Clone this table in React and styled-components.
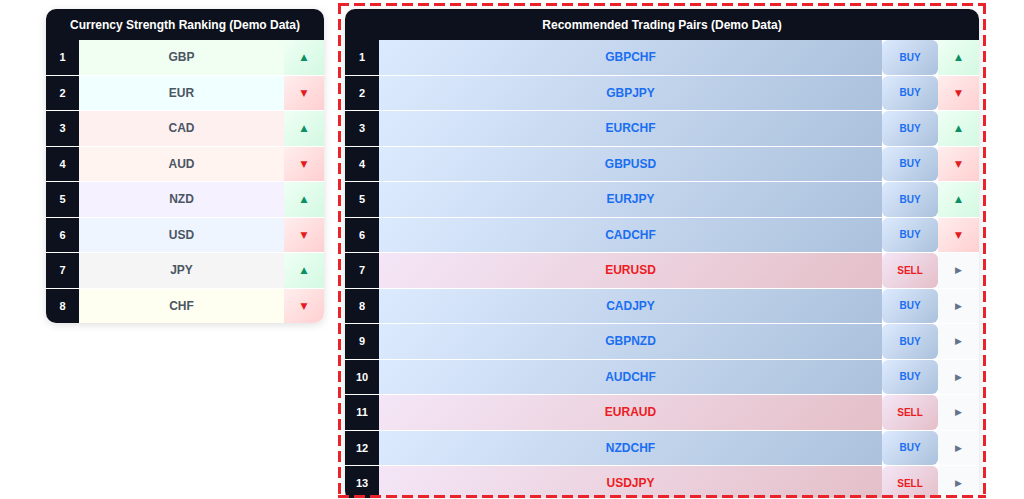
import React from "react";
import styled, { createGlobalStyle } from "styled-components";

const GlobalStyle = createGlobalStyle`
  html, body {
    margin: 0;
    padding: 0;
    background: #ffffff;
    font-family: "Liberation Sans", Arial, sans-serif;
    overflow: hidden;
  }
`;

const Page = styled.div`
  display: flex;
  align-items: flex-start;
  gap: 14px;
  padding: 3px 0 0 46px;
`;

const Card = styled.div`
  width: ${(p) => p.width}px;
  background: #ffffff;
  border-radius: 10px;
  overflow: hidden;
  box-shadow: 0 2px 8px rgba(0, 0, 0, 0.13);
`;

const LeftCard = styled(Card)`
  margin-top: 6px;
`;

const Highlight = styled.div`
  position: relative;
  box-sizing: border-box;
  height: 495px;
  padding: 6px 7px 0;
  overflow: hidden;

  &::after {
    content: "";
    position: absolute;
    inset: 0;
    pointer-events: none;
    background:
      repeating-linear-gradient(90deg, #e8232a 0 11px, transparent 11px 16px) top / 100% 3px no-repeat,
      repeating-linear-gradient(90deg, #e8232a 0 11px, transparent 11px 16px) bottom / 100% 3px no-repeat,
      repeating-linear-gradient(180deg, #e8232a 0 11px, transparent 11px 16px) left / 3px 100% no-repeat,
      repeating-linear-gradient(180deg, #e8232a 0 11px, transparent 11px 16px) right / 3px 100% no-repeat;
  }
`;

const Header = styled.div`
  height: 31px;
  background: #0c111d;
  color: #ffffff;
  font-size: 12px;
  font-weight: 700;
  display: flex;
  align-items: center;
  justify-content: center;
`;

const Rows = styled.div`
  display: flex;
  flex-direction: column;
  gap: 1px;
  background: #ffffff;
`;

const Row = styled.div`
  display: grid;
  grid-template-columns: ${(p) => p.cols};
  height: 34.5px;
`;

const Rank = styled.div`
  background: #0c111d;
  color: #ffffff;
  font-size: 11px;
  font-weight: 700;
  display: flex;
  align-items: center;
  justify-content: center;
`;

const Currency = styled.div`
  background: ${(p) => p.bg};
  color: #4b5563;
  font-size: 12px;
  font-weight: 700;
  display: flex;
  align-items: center;
  justify-content: center;
`;

const tones = {
  buy: {
    bg: "linear-gradient(135deg, #dceafe 0%, #abc1dc 100%)",
    color: "#1a6ef2",
  },
  sell: {
    bg: "linear-gradient(135deg, #f4e6f7 0%, #e4bfc8 100%)",
    color: "#ec1c22",
  },
};

const Pair = styled.div`
  background: ${(p) => tones[p.tone].bg};
  color: ${(p) => tones[p.tone].color};
  font-size: 12px;
  font-weight: 700;
  display: flex;
  align-items: center;
  justify-content: center;
`;

const Action = styled.div`
  background: ${(p) => tones[p.tone].bg};
  color: ${(p) => tones[p.tone].color};
  border-radius: 6px;
  font-size: 10px;
  font-weight: 700;
  display: flex;
  align-items: center;
  justify-content: center;
`;

const trends = {
  up: {
    bg: "linear-gradient(135deg, #effff4 0%, #d3f9e2 100%)",
    color: "#0b8f64",
    glyph: "▲",
  },
  down: {
    bg: "linear-gradient(135deg, #ffeeee 0%, #ffcfd0 100%)",
    color: "#e41b1f",
    glyph: "▼",
  },
  flat: {
    bg: "#f8fafc",
    color: "#64748b",
    glyph: "▶\uFE0E",
  },
};

const Trend = styled.div`
  background: ${(p) => trends[p.dir].bg};
  color: ${(p) => trends[p.dir].color};
  font-family: "DejaVu Sans", sans-serif;
  font-size: 9px;
  display: flex;
  align-items: center;
  justify-content: center;
`;

const currencies = [
  { code: "GBP", bg: "#f0fff1", dir: "up" },
  { code: "EUR", bg: "#f0ffff", dir: "down" },
  { code: "CAD", bg: "#fff0f0", dir: "up" },
  { code: "AUD", bg: "#fff4f0", dir: "down" },
  { code: "NZD", bg: "#f5f1ff", dir: "up" },
  { code: "USD", bg: "#eff5ff", dir: "down" },
  { code: "JPY", bg: "#f5f5f5", dir: "up" },
  { code: "CHF", bg: "#fffff1", dir: "down" },
];

const pairs = [
  { pair: "GBPCHF", tone: "buy", dir: "up" },
  { pair: "GBPJPY", tone: "buy", dir: "down" },
  { pair: "EURCHF", tone: "buy", dir: "up" },
  { pair: "GBPUSD", tone: "buy", dir: "down" },
  { pair: "EURJPY", tone: "buy", dir: "up" },
  { pair: "CADCHF", tone: "buy", dir: "down" },
  { pair: "EURUSD", tone: "sell", dir: "flat" },
  { pair: "CADJPY", tone: "buy", dir: "flat" },
  { pair: "GBPNZD", tone: "buy", dir: "flat" },
  { pair: "AUDCHF", tone: "buy", dir: "flat" },
  { pair: "EURAUD", tone: "sell", dir: "flat" },
  { pair: "NZDCHF", tone: "buy", dir: "flat" },
  { pair: "USDJPY", tone: "sell", dir: "flat" },
];

const App = () => {
  return (
    <>
      <GlobalStyle />
      <Page>
        <LeftCard width={278}>
          <Header>Currency Strength Ranking (Demo Data)</Header>
          <Rows>
            {currencies.map((c, i) => (
              <Row key={c.code} cols="33px 1fr 40px">
                <Rank>{i + 1}</Rank>
                <Currency bg={c.bg}>{c.code}</Currency>
                <Trend dir={c.dir}>{trends[c.dir].glyph}</Trend>
              </Row>
            ))}
          </Rows>
        </LeftCard>

        <Highlight>
          <Card width={634}>
            <Header>Recommended Trading Pairs (Demo Data)</Header>
            <Rows>
              {pairs.map((p, i) => (
                <Row key={p.pair} cols="34px 1fr 56px 41px">
                  <Rank>{i + 1}</Rank>
                  <Pair tone={p.tone}>{p.pair}</Pair>
                  <Action tone={p.tone}>{p.tone.toUpperCase()}</Action>
                  <Trend dir={p.dir}>{trends[p.dir].glyph}</Trend>
                </Row>
              ))}
            </Rows>
          </Card>
        </Highlight>
      </Page>
    </>
  );
};

export default App;
